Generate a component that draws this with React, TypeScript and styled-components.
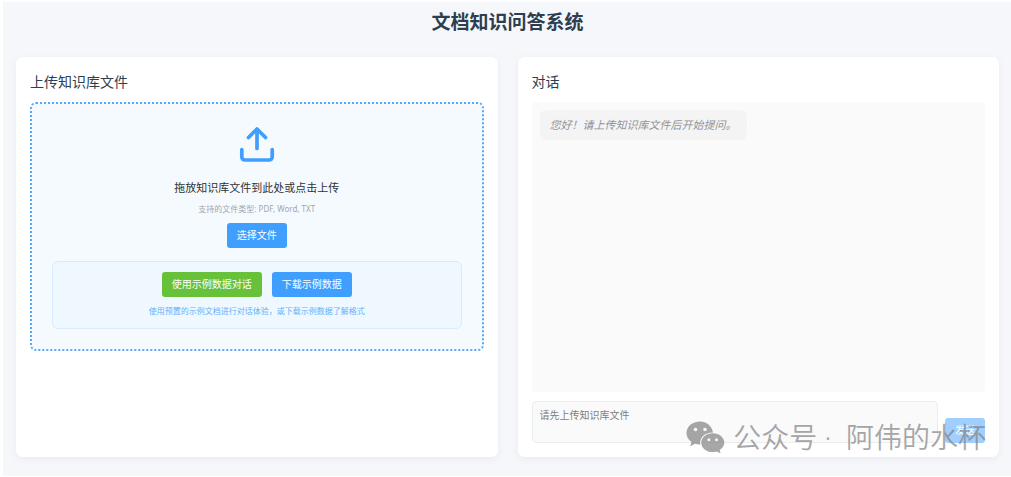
import React from "react";
import styled, { createGlobalStyle } from "styled-components";

const GlobalStyle = createGlobalStyle`
  *, *::before, *::after { box-sizing: border-box; }
  body {
    margin: 0;
    background: #fff;
    color: #2c3e50;
    font-family: "Noto Sans", "Noto Sans CJK SC", sans-serif;
  }
  button, textarea { font-family: inherit; }
`;

const Frame = styled.div`
  display: flex;
  min-height: 100vh;
  padding: 2px 0 1px 3px;
`;

const Page = styled.div`
  flex: 1;
  display: flex;
  flex-direction: column;
  padding: 6px 12px 19px 13px;
  background: #f5f7fa;
`;

const PageTitle = styled.h1`
  margin: 0 0 21px;
  text-align: center;
  font-size: 19px;
  line-height: 28px;
  font-weight: 700;
`;

const Columns = styled.main`
  flex: 1;
  display: grid;
  grid-template-columns: 1fr 1fr;
  gap: 20px;
`;

const Card = styled.section`
  position: relative;
  display: flex;
  flex-direction: column;
  min-width: 0;
  padding: 14px;
  border-radius: 7px;
  background: #fff;
  box-shadow: 0 2px 9px rgba(0, 0, 0, 0.05);
`;

const CardTitle = styled.h2`
  margin: 0 0 9px;
  font-size: 14px;
  line-height: 22px;
  font-weight: 400;
`;

const DropZone = styled.div`
  display: flex;
  flex-direction: column;
  align-items: center;
  padding: 20px;
  border: 2px dotted #55a8fd;
  border-radius: 6px;
  background: #f5faff;
  text-align: center;
`;

const UploadIcon = styled.svg`
  display: block;
  width: 40px;
  height: 40px;
  margin-bottom: 15px;
`;

const DropText = styled.p`
  margin: 0 0 5px;
  color: #303133;
  font-size: 11px;
  line-height: 18px;
`;

const Note = styled.p<{ $color: string }>`
  margin: 0;
  color: ${(p) => p.$color};
  font-size: 8px;
  line-height: 14px;
`;

const Button = styled.button<{ $color?: string }>`
  height: 25px;
  padding: 0 10px;
  border: 0;
  border-radius: 3px;
  background: ${(p) => p.$color ?? "#409eff"};
  color: #fff;
  font-size: 10px;
  line-height: 15px;
  white-space: nowrap;
  cursor: pointer;

  &:disabled {
    background: #a0cfff;
    cursor: not-allowed;
  }
`;

const PickButton = styled(Button)`
  margin: 7px 0 13px;
`;

const SampleBox = styled.div`
  align-self: stretch;
  display: flex;
  flex-direction: column;
  align-items: center;
  gap: 7px;
  padding: 10px;
  border: 1px solid #d9ecff;
  border-radius: 6px;
  background: #f0f8ff;
`;

const ButtonRow = styled.div`
  display: flex;
  align-items: center;
  gap: 10px;
`;

const Messages = styled.div`
  flex: 1;
  display: flex;
  flex-direction: column;
  align-items: flex-start;
  padding: 8px;
  border-radius: 4px;
  background: #fafafa;
`;

const Bubble = styled.p`
  margin: 0;
  padding: 6px 10px;
  border-radius: 6px;
  background: #f4f4f5;
  color: #909399;
  font-size: 11px;
  line-height: 18px;
  font-style: italic;
`;

const Composer = styled.form`
  display: flex;
  align-items: flex-end;
  gap: 7px;
  margin-top: 9px;
`;

const Question = styled.textarea`
  flex: 1;
  min-width: 0;
  height: 42px;
  padding: 6px 7px;
  border: 1px solid #ebeef1;
  border-radius: 4px;
  background: #fafafa;
  font-size: 10px;
  line-height: 15px;
  resize: none;

  &::placeholder { color: #7d7d7d; opacity: 1; }
`;

const Watermark = styled.div`
  position: absolute;
  right: 13px;
  bottom: 0;
  display: flex;
  align-items: center;
  gap: 8px;
  color: #828282;
  opacity: 0.7;
  font-size: 28px;
  line-height: 40px;
  font-weight: 350;
  white-space: pre;
  pointer-events: none;
`;

const WechatIcon = styled.svg`
  width: 39px;
  height: 32px;
`;

export default function App() {
  return (
    <Frame>
      <GlobalStyle />
      <Page>
        <PageTitle>文档知识问答系统</PageTitle>
        <Columns>
          <Card>
            <CardTitle>上传知识库文件</CardTitle>
            <DropZone>
              <UploadIcon
                viewBox="0 0 40 40"
                fill="none"
                stroke="#409eff"
                strokeWidth="3.7"
                strokeLinecap="round"
                strokeLinejoin="round"
                aria-hidden="true"
              >
                <path d="M20 24.500V5.500M11.500 13.500l8.500-8.500 8.500 8.500" />
                <path d="M4.800 25.500V33a3 3 0 0 0 3 3h24.400a3 3 0 0 0 3-3v-7.500" />
              </UploadIcon>
              <DropText>拖放知识库文件到此处或点击上传</DropText>
              <Note $color="#a3a6ad">支持的文件类型: PDF, Word, TXT</Note>
              <PickButton type="button">选择文件</PickButton>
              <SampleBox>
                <ButtonRow>
                  <Button type="button" $color="#67c23a">使用示例数据对话</Button>
                  <Button type="button">下载示例数据</Button>
                </ButtonRow>
                <Note $color="#65b0fb">
                  使用预置的示例文档进行对话体验，或下载示例数据了解格式
                </Note>
              </SampleBox>
            </DropZone>
          </Card>
          <Card>
            <CardTitle>对话</CardTitle>
            <Messages>
              <Bubble>您好！请上传知识库文件后开始提问。</Bubble>
            </Messages>
            <Composer>
              <Question aria-label="问题" placeholder="请先上传知识库文件" disabled />
              <Button type="submit" disabled>发送</Button>
            </Composer>
            <Watermark>
              <WechatIcon viewBox="0 0 39 32" fill="currentColor" aria-hidden="true">
                <path
                  fillRule="evenodd"
                  d="M14 0.500C6.300 0.500 0.500 5.500 0.500 12c0 3.700 1.900 6.800 5 9l-1.300 4.200 4.900-2.500c1.700.5 3.400.8 5.200.7C13.200 17 18.500 11.300 27 11.400 26 5 20.500.5 14 .5ZM9.500 6.700a1.800 1.800 0 1 1 0 3.600 1.800 1.800 0 0 1 0-3.600Zm9.500 0a1.800 1.800 0 1 1 0 3.600 1.800 1.800 0 0 1 0-3.600Z"
                />
                <path
                  fillRule="evenodd"
                  d="M26.800 12.300c-6.500 0-11.500 4.200-11.500 9.400s5 9.400 11.500 9.400c1.400 0 2.700-.2 3.900-.6l4 2-1-3.500c2.800-1.800 4.600-4.400 4.600-7.300 0-5.200-5.100-9.400-11.500-9.400Zm-3.900 5a1.500 1.500 0 1 1 0 3 1.500 1.500 0 0 1 0-3Zm7.600 0a1.500 1.500 0 1 1 0 3 1.500 1.500 0 0 1 0-3Z"
                />
              </WechatIcon>
              <span>{"公众号 ·  阿伟的水杯"}</span>
            </Watermark>
          </Card>
        </Columns>
      </Page>
    </Frame>
  );
}
